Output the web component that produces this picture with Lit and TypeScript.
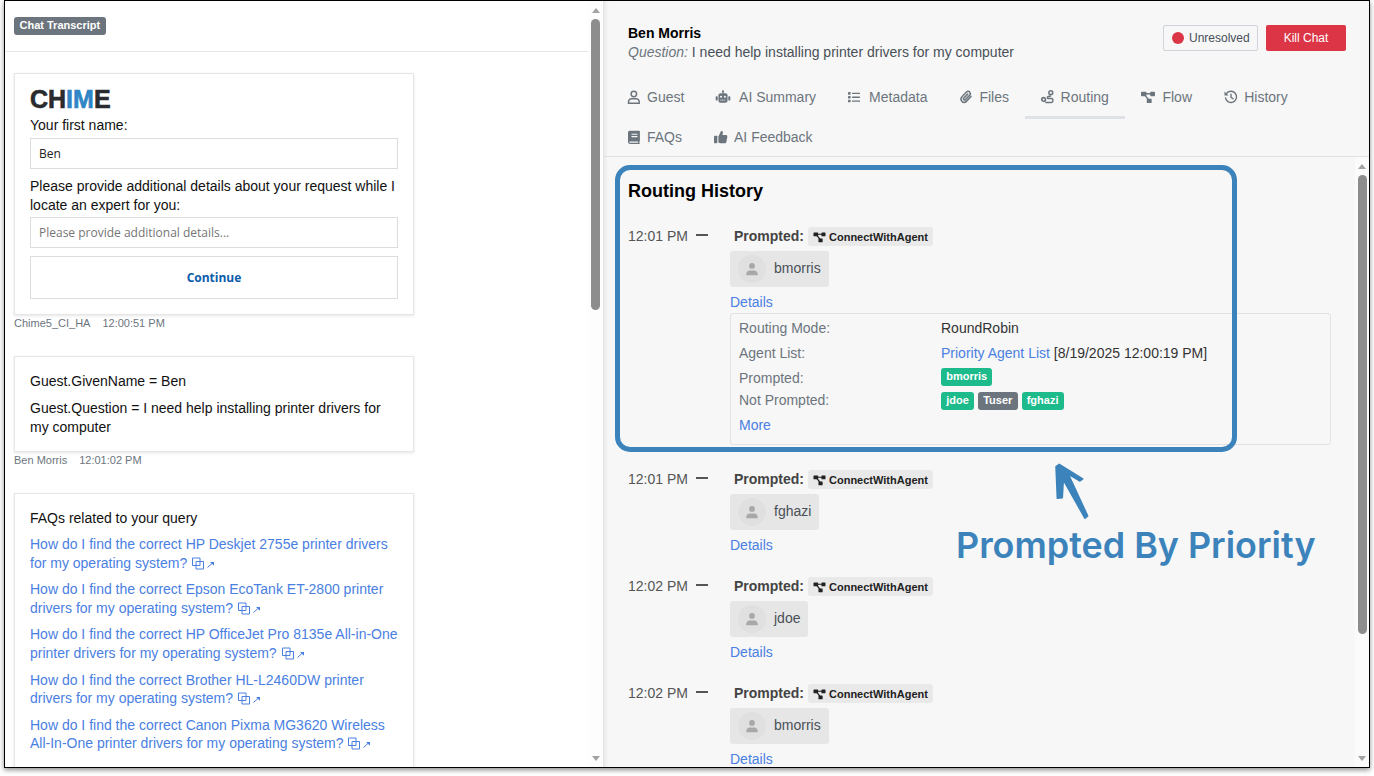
import { LitElement, html, css, svg } from "lit";
import { customElement } from "lit/decorators.js";

const faqs = [
  "How do I find the correct HP Deskjet 2755e printer drivers for my operating system?",
  "How do I find the correct Epson EcoTank ET-2800 printer drivers for my operating system?",
  "How do I find the correct HP OfficeJet Pro 8135e All-in-One printer drivers for my operating system?",
  "How do I find the correct Brother HL-L2460DW printer drivers for my operating system?",
  "How do I find the correct Canon Pixma MG3620 Wireless All-In-One printer drivers for my operating system?",
];

const icons: Record<string, any> = {
  guest: svg`<g transform="translate(-1.300 0)"><circle cx="8" cy="4.500" r="3.100" fill="none" stroke="currentColor" stroke-width="1.700"/><path d="M1.900 15.200v-1.800c0-2 1.600-3.300 3.300-3.300h5.600c1.700 0 3.300 1.300 3.300 3.300v1.800z" fill="none" stroke="currentColor" stroke-width="1.700"/></g>`,
  robot: svg`<rect x="7.300" y="1" width="1.400" height="3" fill="currentColor"/><circle cx="8" cy="1.600" r="1.200" fill="currentColor"/><rect x="2.800" y="3.600" width="10.400" height="11" rx="2.400" fill="currentColor"/><rect x="-.400" y="7" width="2.400" height="5" rx=".9" fill="currentColor"/><rect x="14" y="7" width="2.400" height="5" rx=".9" fill="currentColor"/><circle cx="5.800" cy="7.800" r="1.200" fill="#f7f7f7"/><circle cx="10.200" cy="7.800" r="1.200" fill="#f7f7f7"/><path d="M5 11.600h6" stroke="#f7f7f7" stroke-width="1" stroke-dasharray="1.200 .7"/>`,
  list: svg`<g fill="currentColor" transform="translate(0 .2)"><rect x="0" y="2.200" width="2.900" height="2.900" rx=".5"/><rect x="0" y="6.600" width="2.900" height="2.900" rx=".5"/><rect x="0" y="11" width="2.900" height="2.900" rx=".5"/><rect x="4.500" y="2.900" width="9.300" height="1.600" rx=".5"/><rect x="4.500" y="7.300" width="9.300" height="1.600" rx=".5"/><rect x="4.500" y="11.700" width="9.300" height="1.600" rx=".5"/></g>`,
  clip: svg`<g transform="translate(1 0)"><path d="M12.700 7.300 7.400 13c-1.500 1.600-3.700 1.600-5 .1-1.400-1.500-1.400-3.800 0-5.300l5.200-5.600c1-1.100 2.600-1.100 3.600 0 .9 1 .9 2.600 0 3.700l-5 5.200c-.5.500-1.200.500-1.700 0s-.5-1.300 0-1.800L9 4.700" fill="none" stroke="currentColor" stroke-width="1.700" stroke-linecap="round" stroke-linejoin="round"/></g>`,
  route: svg`<circle cx="3" cy="10.800" r="2.100" fill="none" stroke="currentColor" stroke-width="1.900"/><circle cx="11.200" cy="3" r="2.200" fill="none" stroke="currentColor" stroke-width="1.700"/><path d="M11 6.800 8.300 7.500C6.800 8 7 9.800 8.500 9.800h3.700c2 0 1.900 4.400-.2 4.400H5.500" fill="none" stroke="currentColor" stroke-width="1.700" stroke-linecap="round"/>`,
  flow: svg`<g fill="currentColor"><rect x="0" y="2" width="6.200" height="5" rx=".8"/><rect x="10.600" y="2" width="5.400" height="5" rx=".8"/><rect x="6.600" y="10" width="5.600" height="5" rx=".8"/></g><path d="M5 4.300h6.500M4.400 5.800l4.200 5.200" stroke="currentColor" stroke-width="1.600" fill="none"/>`,
  history: svg`<path d="M2.700 4.200A6.400 6.400 0 1 1 1.700 9" fill="none" stroke="currentColor" stroke-width="1.600" stroke-linecap="round"/><path d="M.6 1.600v4.600H5.200z" fill="currentColor"/><path d="M8 4.800v3.600l2.500 1.600" fill="none" stroke="currentColor" stroke-width="1.600" stroke-linecap="round"/>`,
  book: svg`<g transform="translate(-1 0)"><path fill-rule="evenodd" d="M3 .8h10.600c.6 0 1 .4 1 1v10.500c0 .4-.3.7-.6.8v1.900h.1c.3 0 .5.200.5.500s-.2.500-.5.500H3.200C2 16 1 15 1 13.800V2.800c0-1.100.9-2 2-2zm2 3.400h6.800v1.300H5zm0 2.700h6.800v1.300H5zM3.200 13.200c-.4 0-.7.300-.7.700s.3.700.7.700h9.300v-1.400z" fill="currentColor"/></g>`,
  thumb: svg`<rect x="0" y="6.500" width="3.800" height="8.500" rx=".7" fill="currentColor"/><path d="M5 7.300 7.800 1.700c.2-.5.700-.7 1.200-.6 1 .2 1.500 1.200 1.200 2.100L9.500 5.800h4.200c1 0 1.700.9 1.500 1.800l-1.100 6c-.1.800-.8 1.400-1.600 1.400H7c-1.100 0-2-.9-2-2z" fill="currentColor"/>`,
};

const tabs = [
  ["Guest", "guest", 12], ["AI Summary", "robot", 15.7], ["Metadata", "list", 14],
  ["Files", "clip", 13], ["Routing", "route", 12.6], ["Flow", "flow", 14.6],
  ["History", "history", 13.2], ["FAQs", "book", 12], ["AI Feedback", "thumb", 13],
] as const;

const entries = [
  { time: "12:01 PM", agent: "bmorris", open: true },
  { time: "12:01 PM", agent: "fghazi", open: false },
  { time: "12:02 PM", agent: "jdoe", open: false },
  { time: "12:02 PM", agent: "bmorris", open: false },
];

@customElement("app-root")
export class AppRoot extends LitElement {
  static styles = css`
    :host { display: block; width: 1374px; height: 776px; background: #fff; font-family: "Liberation Sans", Arial, sans-serif; font-size: 14px; overflow: hidden; }
    * { box-sizing: border-box; }
    a { color: #4a80e2; text-decoration: none; }
    .frame { position: relative; margin-left: 4px; width: 1366px; height: 768px; border: 1px solid #000; display: flex; background: #fff; box-shadow: 0 2px 5px rgba(0,0,0,.45); overflow: visible; }
    .left { width: 598px; height: 766px; display: flex; overflow: hidden; background: #fff; }
    .left-main { flex: 1; min-width: 0; overflow: hidden; }
    .left-head { height: 51px; border-bottom: 1px solid #e6e6e6; padding-left: 9px; display: flex; align-items: center; }
    .head-badge { background: #6c757d; color: #fff; font-weight: 700; font-size: 11px; height: 18px; line-height: 17px; padding: 0 5.500px; border-radius: 3px; }
    .left-body { padding: 21px 0 0 9px; }
    .card { width: 400px; border: 1px solid #e6e6e6; padding: 15px; box-shadow: 0 1px 3px rgba(0,0,0,.1); line-height: 19px; color: #111; background: #fff; }
    .logo { height: 20px; line-height: 20px; font-size: 25px; font-weight: 700; letter-spacing: 0; color: #292b2e; -webkit-text-stroke: .6px currentColor; }
    .logo b { color: #2f85c6; font-weight: 700; }
    .lbl { margin-top: 7px; }
    .lbl.second { margin-top: 8px; }
    .field { height: 31px; border: 1px solid #ddd; margin-top: 3px; padding-left: 8px; font-family: "Open Sans", sans-serif; font-size: 12px; line-height: 29px; color: #222; }
    .field.ph { color: #757575; margin-top: 2px; }
    .cont { height: 43px; margin-top: 8px; border: 1px solid #ddd; display: flex; align-items: center; justify-content: center; font-family: "Open Sans", sans-serif; font-weight: 700; font-size: 12px; color: #0b5cab; }
    .cap { height: 14px; margin: 1px 0 26px; font-size: 11px; line-height: 14px; color: #6c757d; display: flex; gap: 12px; }
    .card p { margin: 0; }
    .card p + p { margin-top: 8px; }
    .card .two { line-height: 18.500px; }
    .faq-h { margin-bottom: 7px; }
    .faq { display: block; line-height: 18.600px; margin-bottom: 8px; }
    .faq svg { width: 24px; height: 13px; vertical-align: -2px; margin-left: 1px; }

    .sb { width: 14px; flex: none; display: flex; flex-direction: column; align-items: center; position: relative; }
    .sb-left { width: 15px; height: 766px; background: #fdfdfd; }
    .arrow-up { width: 0; height: 0; border: 4px solid transparent; border-top: 0; border-bottom: 5px solid #a3a3a3; margin-top: 7px; flex: none; }
    .arrow-down { width: 0; height: 0; border: 4px solid transparent; border-bottom: 0; border-top: 5px solid #a3a3a3; flex: none; margin-top: auto; margin-bottom: 6px; }
    .thumb { width: 9px; background: #8d8d8d; border-radius: 5px; margin-top: 6px; flex: none; }
    .sb-left .thumb { height: 291px; }
    .sb-right { width: 14px; height: 610px; background: #fbfbfb; }
    .sb-right .thumb { height: 459px; margin-top: 6px; }

    .right { flex: 1; min-width: 0; height: 766px; background: #f7f7f7; display: flex; flex-direction: column; box-shadow: inset 5px 0 5px -4px rgba(0,0,0,.12); }
    .r-head { height: 156px; flex: none; border-bottom: 1px solid #dee2e6; padding: 23px 0 0 1px; }
    .r-top { height: 53px; display: flex; justify-content: space-between; padding: 0 23px 0 24px; }
    .r-name { font-weight: 700; color: #000; line-height: 19px; }
    .r-q { line-height: 19px; color: #495057; }
    .r-q i { color: #6c757d; }
    .acts { display: flex; gap: 8px; margin-top: 1px; height: 26px; }
    .unres { width: 95px; border: 1px solid #ced4da; border-radius: 2px; display: flex; align-items: center; padding-left: 8px; gap: 5px; font-size: 12px; color: #495057; }
    .dot { width: 12px; height: 12px; border-radius: 50%; background: #dc3545; }
    .kill { width: 80px; background: #dc3545; color: #fff; border-radius: 2px; display: flex; align-items: center; justify-content: center; font-size: 12px; font-weight: 400; }
    .tabs { display: flex; flex-wrap: wrap; padding: 0 8px; }
    .tab { position: relative; height: 40px; padding: 0 16px; display: flex; align-items: center; gap: 7px; color: #6c757d; }
    .tab svg { height: 14px; flex: none; overflow: visible; }
    .tab.active::after { content: ""; position: absolute; left: 0; right: 0; bottom: -2px; height: 3px; background: #dee2e6; }
    .r-body { flex: 1; min-height: 0; display: flex; }
    .routes { flex: 1; min-width: 0; padding: 0 24px 0 25px; overflow: hidden; }
    h2 { margin: 0; font-size: 18px; line-height: 22px; color: #000; font-weight: 700; padding-top: 23px; margin-bottom: 24px; }
    .entry { display: flex; padding-bottom: 22px; }
    .time { width: 102px; flex: none; display: flex; align-items: flex-start; line-height: 20px; color: #555; }
    .dash { width: 12px; height: 2px; background: #555; margin: 8px 0 0 8px; }
    .ebody { flex: 1; min-width: 0; }
    .prompt { height: 20px; display: flex; align-items: center; padding-left: 4px; font-weight: 700; color: #444; gap: 4px; }
    .wf { height: 19px; margin-top: 1px; background: #e9e9e9; border-radius: 3px; display: flex; align-items: center; gap: 3px; padding: 0 5.500px 0 5px; font-size: 11px; color: #222; }
    .wf svg { width: 13px; height: 12px; color: #222; }
    .agent { display: inline-flex; align-items: center; height: 36px; margin-top: 5px; padding: 0 8px; gap: 8px; background: #e6e6e6; border-radius: 3px; color: #495057; vertical-align: top; }
    .agent span { padding-bottom: 2px; }
    .avatar { width: 28px; height: 28px; border-radius: 50%; background: #e0e0e0; display: flex; align-items: center; justify-content: center; }
    .avatar svg { width: 14px; height: 14px; color: #a8a8a8; }
    .det { display: block; margin-top: 6px; line-height: 18px; }
    .box { margin: 2px 0 2px; width: 601px; height: 132px; border: 1px solid #e2e2e2; border-radius: 3px; padding: 5px 8px 0; color: #6c757d; line-height: 18px; }
    .row { display: flex; height: 25px; }
    .row.short { height: 22px; }
    .k { width: 202px; flex: none; }
    .v { color: #333; }
    .badges { display: flex; gap: 4px; }
    .badges.up { margin-top: -1px; }
    .badges.down { margin-top: 1px; }
    .bdg { height: 18px; padding: 0 5.200px; border-radius: 3px; font-size: 11px; font-weight: 700; color: #fff; background: #1dba8b; line-height: 17px; }
    .bdg.grey { background: #6c757d; }

    .note-box { position: absolute; left: 610px; top: 164px; width: 622px; height: 287px; border: 5px solid #3c83bb; border-radius: 15px; pointer-events: none; }
    .note-arrow { position: absolute; left: 1040px; top: 454px; width: 60px; height: 70px; }
    .note-text { position: absolute; left: 951px; top: 522px; font-family: Inter, sans-serif; font-weight: 600; font-size: 35.900px; line-height: 44px; color: #3c83bb; white-space: nowrap; }
  `;

  private scrollbar(cls: string) {
    return html`<div class="sb ${cls}"><div class="arrow-up"></div><div class="thumb"></div><div class="arrow-down"></div></div>`;
  }

  private extIcon() {
    return html`<svg viewBox="0 0 24 13" fill="none"><path d="M.5 1h7.500v7.500H.5zM4 4.500h7.500V12H4z" stroke="currentColor" stroke-width="1"/><path d="M15.500 10.500 21 5.500" stroke="currentColor" stroke-width="1"/><path d="M18 5h4v3.800z" fill="currentColor"/></svg>`;
  }

  private personIcon() {
    return html`<svg viewBox="0 0 16 16"><circle cx="8" cy="4.500" r="3.300" fill="currentColor"/><path d="M1.500 15v-1.500c0-2.300 1.900-3.800 3.800-3.800h5.400c1.900 0 3.800 1.500 3.800 3.800V15z" fill="currentColor"/></svg>`;
  }

  private entry(e: { time: string; agent: string; open: boolean }) {
    return html`<div class="entry">
      <div class="time"><span>${e.time}</span><div class="dash"></div></div>
      <div class="ebody">
        <div class="prompt"><span>Prompted:</span>
          <span class="wf"><svg viewBox="0 0 16 16">${icons.flow}</svg>ConnectWithAgent</span></div>
        <div class="agent"><div class="avatar">${this.personIcon()}</div><span>${e.agent}</span></div>
        <a class="det">Details</a>
        ${e.open ? html`<div class="box">
          <div class="row"><span class="k">Routing Mode:</span><span class="v">RoundRobin</span></div>
          <div class="row"><span class="k">Agent List:</span><span class="v"><a>Priority Agent List</a> [8/19/2025 12:00:19 PM]</span></div>
          <div class="row short"><span class="k">Prompted:</span><div class="badges up"><span class="bdg">bmorris</span></div></div>
          <div class="row"><span class="k">Not Prompted:</span><div class="badges down"><span class="bdg">jdoe</span><span class="bdg grey">Tuser</span><span class="bdg">fghazi</span></div></div>
          <a>More</a>
        </div>` : ""}
      </div>
    </div>`;
  }

  render() {
    return html`<div class="frame">
      <section class="left">
        <div class="left-main">
          <div class="left-head"><span class="head-badge">Chat Transcript</span></div>
          <div class="left-body">
            <div class="card">
              <div class="logo">CH<b>IM</b>E</div>
              <div class="lbl">Your first name:</div>
              <div class="field">Ben</div>
              <div class="lbl second">Please provide additional details about your request while I locate an expert for you:</div>
              <div class="field ph">Please provide additional details...</div>
              <div class="cont">Continue</div>
            </div>
            <div class="cap"><span>Chime5_CI_HA</span><span>12:00:51 PM</span></div>
            <div class="card">
              <p>Guest.GivenName = Ben</p>
              <p class="two">Guest.Question = I need help installing printer drivers for my computer</p>
            </div>
            <div class="cap"><span>Ben Morris</span><span>12:01:02 PM</span></div>
            <div class="card">
              <div class="faq-h">FAQs related to your query</div>
              ${faqs.map((f) => html`<a class="faq">${f} ${this.extIcon()}</a>`)}
            </div>
          </div>
        </div>
        ${this.scrollbar("sb-left")}
      </section>
      <section class="right">
        <div class="r-head">
          <div class="r-top">
            <div>
              <div class="r-name">Ben Morris</div>
              <div class="r-q"><i>Question:</i> I need help installing printer drivers for my computer</div>
            </div>
            <div class="acts">
              <div class="unres"><span class="dot"></span>Unresolved</div>
              <div class="kill">Kill Chat</div>
            </div>
          </div>
          <div class="tabs">
            ${tabs.map(([label, icon, w]) => html`<div class="tab ${label === "Routing" ? "active" : ""}">
              <svg viewBox="0 0 ${(w * 16) / 14} 16" style="width:${w}px" preserveAspectRatio="xMinYMid meet">${icons[icon]}</svg><span>${label}</span></div>`)}
          </div>
        </div>
        <div class="r-body">
          <div class="routes">
            <h2>Routing History</h2>
            ${entries.map((e) => this.entry(e))}
          </div>
          ${this.scrollbar("sb-right")}
        </div>
      </section>
      <div class="note-box"></div>
      <svg class="note-arrow" viewBox="1045 455 60 70">
        <path d="M1059.300 464.300 1082.700 479 1080 481 1068.300 474 1087.700 516 1085 518.300 1063.300 480 1062.300 497.700 1057.300 498.300 1056 466.700z" fill="#3c83bb" stroke="#3c83bb" stroke-width="1.500" stroke-linejoin="round"/>
      </svg>
      <div class="note-text">Prompted By Priority</div>
    </div>`;
  }
}
